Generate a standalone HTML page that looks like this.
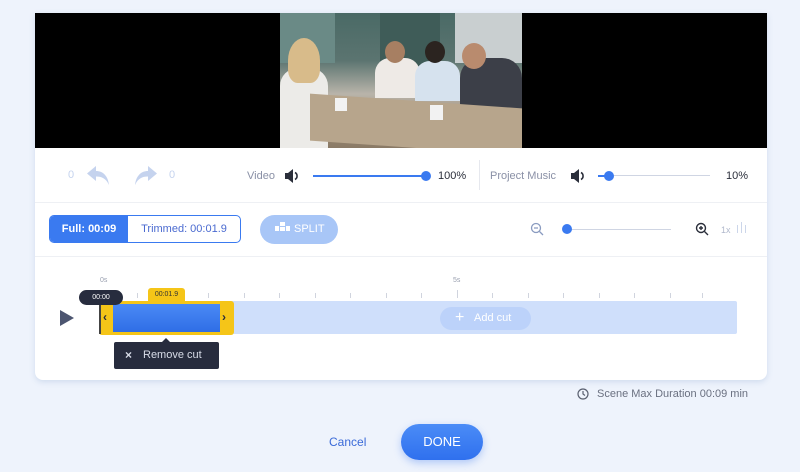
<!DOCTYPE html><html><head><style>
*{margin:0;padding:0;box-sizing:border-box}
body{width:800px;height:472px;background:#eef3fc;font-family:"Liberation Sans",sans-serif;position:relative;overflow:hidden}
.a{position:absolute}
.card{left:35px;top:13px;width:732px;height:367px;background:#fff;border-radius:0 0 8px 8px;box-shadow:0 2px 6px rgba(120,150,200,.25);overflow:hidden}
.t{font-size:11px;color:#8a90a6}
.tick{position:absolute;top:293px;width:1px;height:5px;background:#d0d4de}
</style></head><body>
<div class="a card">
 <div class="a" style="left:0;top:0;width:732px;height:135px;background:#000"></div>
 <div class="a" style="left:245px;top:0;width:242px;height:135px;background:linear-gradient(180deg,#4a6a66 0%,#5b7470 35%,#b9b4aa 60%,#a08e78 78%,#8a7a66 100%);overflow:hidden">
  <div class="a" style="left:0;top:0;width:55px;height:50px;background:#6a8a86"></div>
  <div class="a" style="left:100px;top:0;width:60px;height:55px;background:#3f5c58"></div>
  <div class="a" style="left:175px;top:0;width:67px;height:50px;background:#c9cfd0"></div>
  <div class="a" style="left:0px;top:55px;width:48px;height:80px;background:#ecebe8;border-radius:18px 18px 0 0"></div>
  <div class="a" style="left:8px;top:25px;width:32px;height:45px;background:#d8bb8a;border-radius:50% 50% 30% 30%"></div>
  <div class="a" style="left:95px;top:45px;width:45px;height:40px;background:#eeeae6;border-radius:15px 15px 0 0"></div>
  <div class="a" style="left:105px;top:28px;width:20px;height:22px;background:#a77f62;border-radius:50%"></div>
  <div class="a" style="left:135px;top:48px;width:45px;height:40px;background:#d6e2ee;border-radius:15px 15px 0 0"></div>
  <div class="a" style="left:145px;top:28px;width:20px;height:22px;background:#2b2420;border-radius:50%"></div>
  <div class="a" style="left:180px;top:45px;width:62px;height:70px;background:#3c3f48;border-radius:20px 20px 0 0"></div>
  <div class="a" style="left:182px;top:30px;width:24px;height:26px;background:#b98b6e;border-radius:50%"></div>
  <div class="a" style="left:30px;top:88px;width:212px;height:47px;background:#b7a58c;transform:skewY(4deg)"></div>
  <div class="a" style="left:150px;top:92px;width:13px;height:15px;background:#f2f2f2"></div>
  <div class="a" style="left:55px;top:85px;width:12px;height:13px;background:#f2f2f2"></div>
 </div>
 <div class="a" style="left:0;top:189px;width:732px;height:1px;background:#eef0f4"></div>
 <div class="a" style="left:0;top:243px;width:732px;height:1px;background:#eef0f4"></div>
 <div class="a" style="left:444px;top:147px;width:1px;height:30px;background:#e6e8ee"></div>
</div>
<div class="a" style="left:68px;top:169px;font-size:11px;color:#c5d3ee">0</div>
<svg class="a" style="left:86px;top:165px" width="24" height="21" viewBox="0 0 24 21"><path d="M10 1 L1 8.5 L10 16 V11.5 C16 11.5 20 13.5 23 20 C22 11 17 6 10 6Z" fill="#c5d3ee"/></svg>
<svg class="a" style="left:134px;top:165px" width="24" height="21" viewBox="0 0 24 21"><path d="M14 1 L23 8.5 L14 16 V11.5 C8 11.5 4 13.5 1 20 C2 11 7 6 14 6Z" fill="#c5d3ee"/></svg>
<div class="a" style="left:169px;top:169px;font-size:11px;color:#c5d3ee">0</div>
<div class="a t" style="left:247px;top:170px">Video</div>
<svg class="a" style="left:284px;top:168px" width="16" height="16" viewBox="0 0 16 16"><path d="M1 5h3l5-4v14l-5-4H1z" fill="#2a2e3a"/><path d="M11 4.5a4 4 0 0 1 0 7" stroke="#2a2e3a" stroke-width="1.6" fill="none"/></svg>
<div class="a" style="left:313px;top:175px;width:113px;height:2px;background:#3a7af0"></div>
<div class="a" style="left:421px;top:171px;width:10px;height:10px;border-radius:50%;background:#3a7af0"></div>
<div class="a" style="left:438px;top:170px;font-size:11px;color:#2a2e3a">100%</div>
<div class="a t" style="left:490px;top:170px">Project Music</div>
<svg class="a" style="left:570px;top:168px" width="16" height="16" viewBox="0 0 16 16"><path d="M1 5h3l5-4v14l-5-4H1z" fill="#2a2e3a"/><path d="M11 4.5a4 4 0 0 1 0 7" stroke="#2a2e3a" stroke-width="1.6" fill="none"/></svg>
<div class="a" style="left:598px;top:175px;width:112px;height:1px;background:#cfd5e3"></div>
<div class="a" style="left:598px;top:175px;width:10px;height:2px;background:#3a7af0"></div>
<div class="a" style="left:604px;top:171px;width:10px;height:10px;border-radius:50%;background:#3a7af0"></div>
<div class="a" style="left:726px;top:170px;font-size:11px;color:#2a2e3a">10%</div>
<div class="a" style="left:49px;top:215px;width:192px;height:28px;border:1px solid #3a7af0;border-radius:5px;overflow:hidden;font-size:11px">
 <div class="a" style="left:0;top:0;width:78px;height:26px;background:#3a7af0;color:#fff;text-align:center;line-height:26px;font-weight:bold">Full: 00:09</div>
 <div class="a" style="left:78px;top:0;width:112px;height:26px;color:#4a6ad0;text-align:center;line-height:26px">Trimmed: 00:01.9</div>
</div>
<div class="a" style="left:260px;top:215px;width:78px;height:29px;border-radius:15px;background:#a8c6f7;color:#fff;font-size:11px;line-height:29px;padding-left:34px">SPLIT</div>
<div class="a" style="left:275px;top:226px;width:4px;height:5px;background:#fff"></div><div class="a" style="left:280px;top:222px;width:5px;height:4px;background:#fff"></div><div class="a" style="left:280px;top:227px;width:5px;height:4px;background:#fff"></div><div class="a" style="left:286px;top:226px;width:4px;height:5px;background:#fff"></div>
<svg class="a" style="left:530px;top:222px" width="14" height="14" viewBox="0 0 14 14"><circle cx="6" cy="6" r="4.5" stroke="#8a9bc0" stroke-width="1.3" fill="none"/><path d="M4 6h4M9.5 9.5L13 13" stroke="#8a9bc0" stroke-width="1.3"/></svg>
<div class="a" style="left:563px;top:229px;width:108px;height:1px;background:#cfd5e3"></div>
<div class="a" style="left:562px;top:224px;width:10px;height:10px;border-radius:50%;background:#3a7af0"></div>
<svg class="a" style="left:695px;top:222px" width="14" height="14" viewBox="0 0 14 14"><circle cx="6" cy="6" r="4.5" stroke="#2a2e3a" stroke-width="1.4" fill="none"/><path d="M4 6h4M6 4v4M9.5 9.5L13 13" stroke="#2a2e3a" stroke-width="1.4"/></svg>
<div class="a" style="left:721px;top:225px;font-size:9px;color:#b0b8cc">1x</div>
<div class="a" style="left:737px;top:225px;width:1px;height:8px;background:#ccd6ea"></div><div class="a" style="left:741px;top:222px;width:1px;height:11px;background:#ccd6ea"></div><div class="a" style="left:745px;top:225px;width:1px;height:8px;background:#ccd6ea"></div>
<div class="a" style="left:100px;top:277px;font-size:7px;color:#9aa0b0">0s</div>
<div class="a" style="left:453px;top:277px;font-size:7px;color:#9aa0b0">5s</div>
<div class="tick" style="left:137px"></div><div class="tick" style="left:173px"></div><div class="tick" style="left:208px"></div><div class="tick" style="left:244px"></div><div class="tick" style="left:279px"></div><div class="tick" style="left:315px"></div><div class="tick" style="left:350px"></div><div class="tick" style="left:386px"></div><div class="tick" style="left:421px"></div><div class="tick" style="left:457px;top:290px;height:8px"></div><div class="tick" style="left:492px"></div><div class="tick" style="left:528px"></div><div class="tick" style="left:563px"></div><div class="tick" style="left:599px"></div><div class="tick" style="left:634px"></div><div class="tick" style="left:670px"></div><div class="tick" style="left:702px"></div>
<div class="a" style="left:100px;top:301px;width:637px;height:33px;background:#cfdffb;border-radius:2px"></div>
<div class="a" style="left:440px;top:307px;width:91px;height:23px;border-radius:12px;background:#bcd2fa;color:#fff;font-size:11px;line-height:23px;padding-left:34px">Add cut</div>
<div class="a" style="left:455px;top:312px;color:#fff;font-size:16px;line-height:12px">+</div>
<svg class="a" style="left:59px;top:309px" width="16" height="18"><path d="M1 1L15 9L1 17Z" fill="#4c5570"/></svg>
<div class="a" style="left:99px;top:301px;width:135px;height:34px;background:#f5c518;border-radius:3px"></div>
<div class="a" style="left:113px;top:304px;width:107px;height:28px;background:linear-gradient(#4a8af5,#2f6ee6)"></div>
<div class="a" style="left:103px;top:310px;font-size:12px;font-weight:bold;color:#2a2e3a">‹</div>
<div class="a" style="left:222px;top:310px;font-size:12px;font-weight:bold;color:#2a2e3a">›</div>
<div class="a" style="left:99px;top:300px;width:2px;height:34px;background:#444"></div>
<div class="a" style="left:148px;top:288px;width:37px;height:13px;background:#f5c518;border-radius:3px 3px 0 0;font-size:7px;color:#333;text-align:center;line-height:13px">00:01.9</div>
<div class="a" style="left:79px;top:290px;width:44px;height:15px;background:#272c3e;border-radius:8px;font-size:7px;color:#fff;text-align:center;line-height:15px">00:00</div>
<div class="a" style="left:114px;top:342px;width:105px;height:27px;background:#272c3e;border-radius:2px;color:#d8dce8;font-size:11px;line-height:27px;padding-left:29px">Remove cut</div>
<div class="a" style="left:125px;top:342px;color:#d8dce8;font-size:12px;line-height:27px;font-weight:bold">×</div>
<div class="a" style="left:162px;top:338px;width:0;height:0;border-left:4px solid transparent;border-right:4px solid transparent;border-bottom:4px solid #272c3e"></div>
<svg class="a" style="left:577px;top:388px" width="12" height="12"><circle cx="6" cy="6" r="5" stroke="#5a6070" stroke-width="1.2" fill="none"/><path d="M6 3v3l2 1.5" stroke="#5a6070" stroke-width="1.2" fill="none"/></svg>
<div class="a" style="left:597px;top:388px;font-size:11px;color:#6a7080">Scene Max Duration 00:09 min</div>
<div class="a" style="left:329px;top:435px;font-size:12px;color:#3a6ad8">Cancel</div>
<div class="a" style="left:401px;top:424px;width:82px;height:36px;border-radius:18px;background:linear-gradient(#4b8cf7,#2f70ee);box-shadow:0 3px 8px rgba(60,120,240,.35);color:#fff;font-size:13px;text-align:center;line-height:36px">DONE</div>
</body></html>
